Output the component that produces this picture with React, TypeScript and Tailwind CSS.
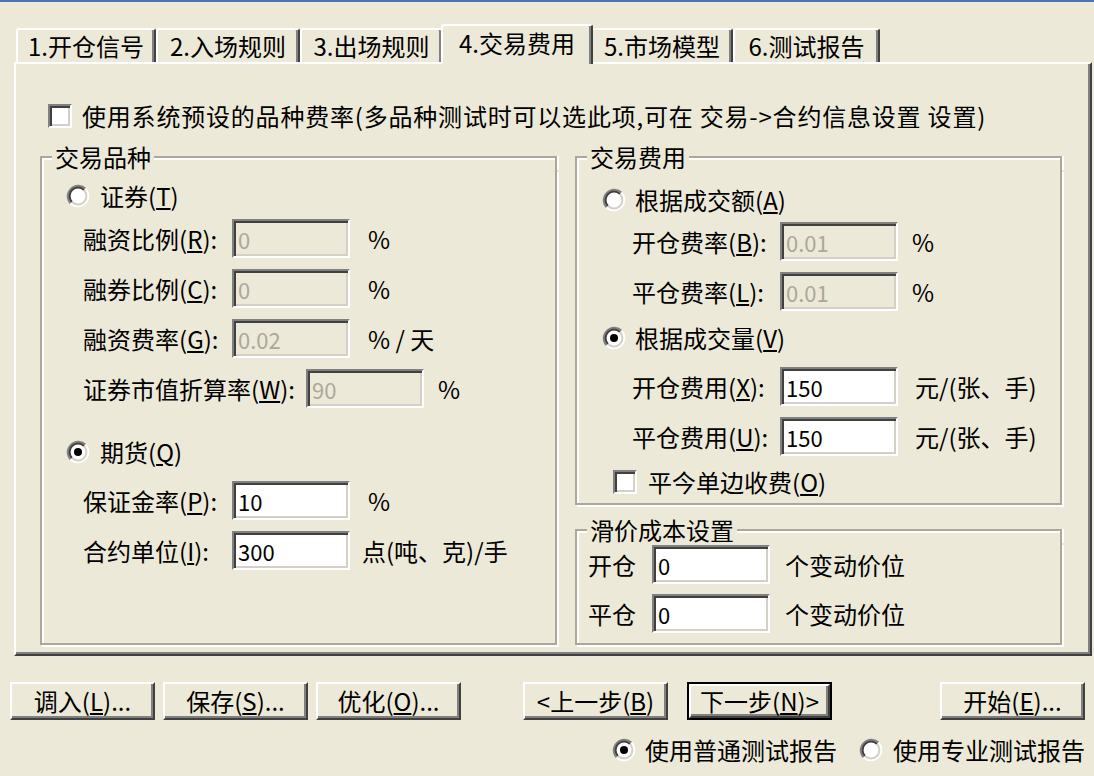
import type { ReactNode } from "react";

const FONT = "font-['Noto_Sans_CJK_SC','Liberation_Sans',sans-serif]";

function Radio({ checked = false }: { checked?: boolean }) {
  return (
    <svg width="24" height="24" viewBox="0 0 24 24" className="shrink-0">
      <circle cx="12" cy="12" r="11" fill="white" />
      <path d="M4.58 19.42 A10.5 10.5 0 0 1 19.42 4.58" stroke="#808080" strokeWidth="2" fill="none" />
      <path d="M5.99 18.01 A8.5 8.5 0 0 1 18.01 5.99" stroke="#404040" strokeWidth="2" fill="none" />
      <path d="M19.42 4.58 A10.5 10.5 0 0 1 4.58 19.42" stroke="#ffffff" strokeWidth="2" fill="none" />
      <path d="M18.01 5.99 A8.5 8.5 0 0 1 5.99 18.01" stroke="#d4d0c8" strokeWidth="2" fill="none" />
      {checked && <circle cx="12" cy="12" r="4" fill="black" />}
    </svg>
  );
}

function CheckBox() {
  return (
    <div className="h-[24px] w-[24px] shrink-0 border-2 border-t-[#808080] border-l-[#808080] border-r-white border-b-white bg-white shadow-[inset_2px_2px_0_#404040,inset_-2px_-2px_0_#d4d0c8]" />
  );
}

function Input({ value, disabled = false }: { value: string; disabled?: boolean }) {
  return (
    <div
      className={`flex h-[39px] w-[118px] shrink-0 items-center border-2 border-t-[#808080] border-l-[#808080] border-r-white border-b-white px-[4px] text-[22px] shadow-[inset_2px_2px_0_#404040,inset_-2px_-2px_0_#d4d0c8] ${
        disabled ? "bg-[#ece9d8] text-[#aca899]" : "bg-white text-black"
      }`}
    >
      {value}
    </div>
  );
}

function Key({ k }: { k: string }) {
  return (
    <>
      (<u>{k}</u>)
    </>
  );
}

function Field({
  label,
  value,
  unit,
  disabled = false,
  labelW,
  unitMl,
}: {
  label: ReactNode;
  value: string;
  unit?: string;
  disabled?: boolean;
  labelW: string;
  unitMl: string;
}) {
  return (
    <div className="flex h-[39px] items-center">
      <span className={`${labelW} shrink-0 whitespace-nowrap`}>{label}</span>
      <Input value={value} disabled={disabled} />
      {unit && <span className={`${unitMl} whitespace-nowrap`}>{unit}</span>}
    </div>
  );
}

function Group({
  title,
  w,
  bodyH,
  children,
  className = "",
}: {
  title: string;
  w: string;
  bodyH: string;
  children: ReactNode;
  className?: string;
}) {
  return (
    <div className={`flex flex-col ${w} ${className}`}>
      <div className="flex h-[26px] items-end">
        <div className="h-[14px] w-[12px] border-l-2 border-t-2 border-[#aca899] shadow-[inset_2px_2px_0_white]" />
        <span className="self-center px-[3px] leading-[26px]">{title}</span>
        <div className="h-[14px] flex-1 border-r-2 border-t-2 border-[#aca899] shadow-[inset_0_2px_0_white,2px_0_0_white]" />
      </div>
      <div className={`${bodyH} flex flex-col border-x-2 border-b-2 border-[#aca899] shadow-[inset_2px_0_0_white,2px_2px_0_white]`}>
        {children}
      </div>
    </div>
  );
}

function Button({ children, def = false }: { children: ReactNode; def?: boolean }) {
  const bevel =
    "flex items-center justify-center border-2 border-t-white border-l-white border-r-[#404040] border-b-[#404040] shadow-[inset_-2px_-2px_0_#808080] whitespace-nowrap";
  if (def) {
    return (
      <div className="h-[38px] w-[145px] shrink-0 border-2 border-black">
        <div className={`h-full w-full ${bevel}`}>{children}</div>
      </div>
    );
  }
  return <div className={`h-[38px] w-[145px] shrink-0 ${bevel}`}>{children}</div>;
}

const tabs = [
  { label: "1.开仓信号", w: "w-[140px]" },
  { label: "2.入场规则", w: "w-[144px]" },
  { label: "3.出场规则", w: "w-[143px]" },
  { label: "4.交易费用", w: "w-[152px]", active: true },
  { label: "5.市场模型", w: "w-[142px]" },
  { label: "6.测试报告", w: "w-[147px]" },
];

export default function App() {
  return (
    <div className={`flex h-[776px] w-[1094px] flex-col overflow-hidden bg-[#ece9d8] text-[24px] leading-none text-black ${FONT}`}>
      <div className="h-[2px] shrink-0 bg-[#4f74ad]" />
      <div className="h-[22px] shrink-0" />

      {/* tabs */}
      <div className="flex h-[38px] shrink-0 items-start pl-[16px]">
        {tabs.map((t, i) =>
          t.active ? (
            <div
              key={i}
              className={`relative z-10 -mx-[2px] flex h-[40px] ${t.w} shrink-0 items-center justify-center rounded-t-[3px] border-l-2 border-t-2 border-r-2 border-l-white border-t-white border-r-[#404040] bg-[#ece9d8] pb-[4px] shadow-[inset_-2px_0_0_#808080]`}
            >
              {t.label}
            </div>
          ) : (
            <div
              key={i}
              className={`mt-[4px] flex h-[34px] ${t.w} shrink-0 items-center justify-center rounded-t-[3px] border-l-2 border-t-2 border-r-2 border-l-white border-t-white border-r-[#404040] shadow-[inset_-2px_0_0_#808080]`}
            >
              {t.label}
            </div>
          )
        )}
      </div>

      {/* tab page */}
      <div className="ml-[14px] flex h-[594px] w-[1078px] shrink-0 flex-col border-2 border-t-white border-l-white border-r-[#404040] border-b-[#404040] shadow-[inset_-2px_-2px_0_#808080]">
        <div className="mt-[40px] flex items-center gap-[10px] pl-[32px]">
          <CheckBox />
          <span className="whitespace-nowrap tracking-[0.8px]">
            使用系统预设的品种费率(多品种测试时可以选此项,可在 交易-&gt;合约信息设置 设置)
          </span>
        </div>

        <div className="mt-[16px] flex gap-[18px] pl-[24px]">
          {/* 交易品种 */}
          <Group title="交易品种" w="w-[517px]" bodyH="h-[475px]">
            <div className="mt-[14px] flex h-[24px] items-center gap-[10px] pl-[24px]">
              <Radio />
              <span>
                证券<Key k="T" />
              </span>
            </div>
            <div className="mt-[11px] flex flex-col gap-[11px] pl-[41px]">
              <Field label={<>融资比例<Key k="R" />:</>} value="0" unit="%" disabled labelW="w-[149px]" unitMl="ml-[18px]" />
              <Field label={<>融券比例<Key k="C" />:</>} value="0" unit="%" disabled labelW="w-[149px]" unitMl="ml-[18px]" />
              <Field label={<>融资费率<Key k="G" />:</>} value="0.02" unit="% / 天" disabled labelW="w-[149px]" unitMl="ml-[18px]" />
              <Field label={<>证券市值折算率<Key k="W" />:</>} value="90" unit="%" disabled labelW="w-[223px]" unitMl="ml-[14px]" />
            </div>
            <div className="mt-[32px] flex h-[24px] items-center gap-[10px] pl-[24px]">
              <Radio checked />
              <span>
                期货<Key k="Q" />
              </span>
            </div>
            <div className="mt-[17px] flex flex-col gap-[11px] pl-[41px]">
              <Field label={<>保证金率<Key k="P" />:</>} value="10" unit="%" labelW="w-[149px]" unitMl="ml-[18px]" />
              <Field label={<>合约单位<Key k="I" />:</>} value="300" unit="点(吨、克)/手" labelW="w-[149px]" unitMl="ml-[12px]" />
            </div>
          </Group>

          <div className="flex flex-col">
            {/* 交易费用 */}
            <Group title="交易费用" w="w-[487px]" bodyH="h-[335px]">
              <div className="mt-[18px] flex h-[24px] items-center gap-[9px] pl-[25px]">
                <Radio />
                <span>
                  根据成交额<Key k="A" />
                </span>
              </div>
              <div className="mt-[10px] flex flex-col gap-[11px] pl-[55px]">
                <Field label={<>开仓费率<Key k="B" />:</>} value="0.01" unit="%" disabled labelW="w-[148px]" unitMl="ml-[14px]" />
                <Field label={<>平仓费率<Key k="L" />:</>} value="0.01" unit="%" disabled labelW="w-[148px]" unitMl="ml-[14px]" />
              </div>
              <div className="mt-[15px] flex h-[24px] items-center gap-[9px] pl-[25px]">
                <Radio checked />
                <span>
                  根据成交量<Key k="V" />
                </span>
              </div>
              <div className="mt-[17px] flex flex-col gap-[11px] pl-[55px]">
                <Field label={<>开仓费用<Key k="X" />:</>} value="150" unit="元/(张、手)" labelW="w-[148px]" unitMl="ml-[17px]" />
                <Field label={<>平仓费用<Key k="U" />:</>} value="150" unit="元/(张、手)" labelW="w-[148px]" unitMl="ml-[17px]" />
              </div>
              <div className="mt-[14px] flex items-center gap-[11px] pl-[36px]">
                <CheckBox />
                <span>
                  平今单边收费<Key k="O" />
                </span>
              </div>
            </Group>

            {/* 滑价成本设置 */}
            <Group title="滑价成本设置" w="w-[487px]" bodyH="h-[102px]" className="mt-[12px]">
              <div className="mt-[2px] flex flex-col gap-[10px] pl-[11px]">
                <Field label="开仓" value="0" unit="个变动价位" labelW="w-[64px]" unitMl="ml-[15px]" />
                <Field label="平仓" value="0" unit="个变动价位" labelW="w-[64px]" unitMl="ml-[15px]" />
              </div>
            </Group>
          </div>
        </div>
      </div>

      {/* buttons */}
      <div className="mt-[26px] flex shrink-0 pl-[10px]">
        <Button>
          调入<Key k="L" />...
        </Button>
        <div className="ml-[8px]">
          <Button>
            保存<Key k="S" />...
          </Button>
        </div>
        <div className="ml-[8px]">
          <Button>
            优化<Key k="O" />...
          </Button>
        </div>
        <div className="ml-[62px]">
          <Button>
            &lt;上一步<Key k="B" />
          </Button>
        </div>
        <div className="ml-[19px]">
          <Button def>
            下一步<Key k="N" />&gt;
          </Button>
        </div>
        <div className="ml-[108px]">
          <Button>
            开始<Key k="E" />...
          </Button>
        </div>
      </div>

      <div className="mt-[18px] flex h-[24px] shrink-0 items-center pl-[612px]">
        <Radio checked />
        <span className="ml-[9px] whitespace-nowrap">使用普通测试报告</span>
        <span className="ml-[22px]">
          <Radio />
        </span>
        <span className="ml-[10px] whitespace-nowrap">使用专业测试报告</span>
      </div>
    </div>
  );
}
